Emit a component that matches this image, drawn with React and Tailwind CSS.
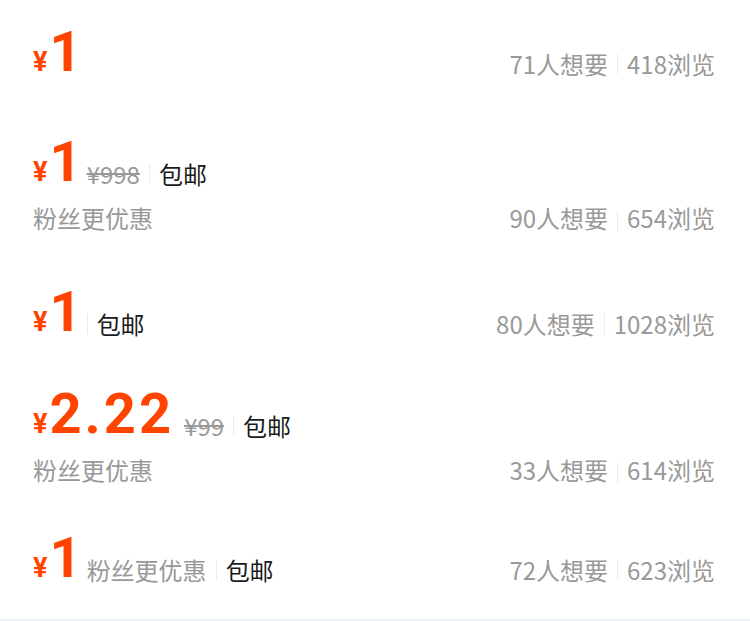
import React from "react";

const items = [
    { id: 1, price: "1", gap: "mt-[24px]", stats: ["71", "418"] },
    { id: 2, price: "1", gap: "mt-[54px]", lead: "ml-[5px]", orig: "998", free: true, fans: "below", stats: ["90", "654"] },
    { id: 3, price: "1", gap: "mt-[53px]", lead: "ml-[5px]", free: true, stats: ["80", "1028"] },
    { id: 4, price: "2.22", wide: true, gap: "mt-[46px]", lead: "ml-[10px]", orig: "99", free: true, fans: "below", stats: ["33", "614"] },
    { id: 5, price: "1", gap: "mt-[47px]", lead: "ml-[5px]", free: true, fans: "inline", stats: ["72", "623"] }
];

const priceFont = "font-['Roboto','Liberation_Sans',Arial,sans-serif] font-bold text-[#ff4400]";

function Divider({ first, lead }) {
    return (
        <span className={"mr-[9px] inline-block h-[20px] w-px bg-[#ebebeb] align-[-3px] " + (first ? lead : "ml-[9px]")} />
    );
}

function Stats({ want, views, shift }) {
    const t = shift ? "inline-block align-[-3px]" : "inline-block";
    return (
        <div className="whitespace-nowrap text-[24px] leading-none text-[#999]">
            <span className={t}>{want}人想要</span>
            <Divider />
            <span className={t}>{views}浏览</span>
        </div>
    );
}

function Item({ item }) {
    const [want, views] = item.stats;
    const parts = [];
    if (item.orig) parts.push(<span key="o" className="inline-block align-[-3px] text-[#999] line-through decoration-[#999]">¥{item.orig}</span>);
    if (item.fans === "inline") parts.push(<span key="f" className="inline-block align-[-3px] text-[#999]">粉丝更优惠</span>);
    if (item.free) parts.push(<span key="p" className="inline-block align-[-3px] text-[#1a1a1a]">包邮</span>);

    return (
        <div className={item.gap}>
            <div className="flex items-baseline justify-between">
                <div className="whitespace-nowrap text-[24px] leading-none">
                    <span className={priceFont + " text-[27px]"}>¥</span>
                    <span className={priceFont + " ml-[2px] text-[56px] " + (item.wide ? "tracking-[3px]" : "tracking-normal")}>
                        {item.price}
                    </span>
                    {parts.map((p, i) => (
                        <React.Fragment key={i}>
                            {i === 0 && p.key !== "p" && <span className={"inline-block " + item.lead} />}
                            {(i > 0 || p.key === "p") && <Divider first={i === 0} lead={item.lead} />}
                            {p}
                        </React.Fragment>
                    ))}
                </div>
                {item.fans !== "below" && <Stats want={want} views={views} shift />}
            </div>
            {item.fans === "below" && (
                <div className="mt-[16px] flex items-baseline justify-between text-[24px] leading-none">
                    <span className="text-[#999]">粉丝更优惠</span>
                    <Stats want={want} views={views} />
                </div>
            )}
        </div>
    );
}

export default function App() {
    return (
        <div className="flex h-[621px] w-[750px] flex-col bg-white font-['Noto_Sans_CJK_SC',sans-serif]">
            <div className="pl-[33px] pr-[35px]">
                {items.map((item) => (
                    <Item key={item.id} item={item} />
                ))}
            </div>
            <div className="mt-auto h-[2px] bg-[#eef1f7]" />
        </div>
    );
}
